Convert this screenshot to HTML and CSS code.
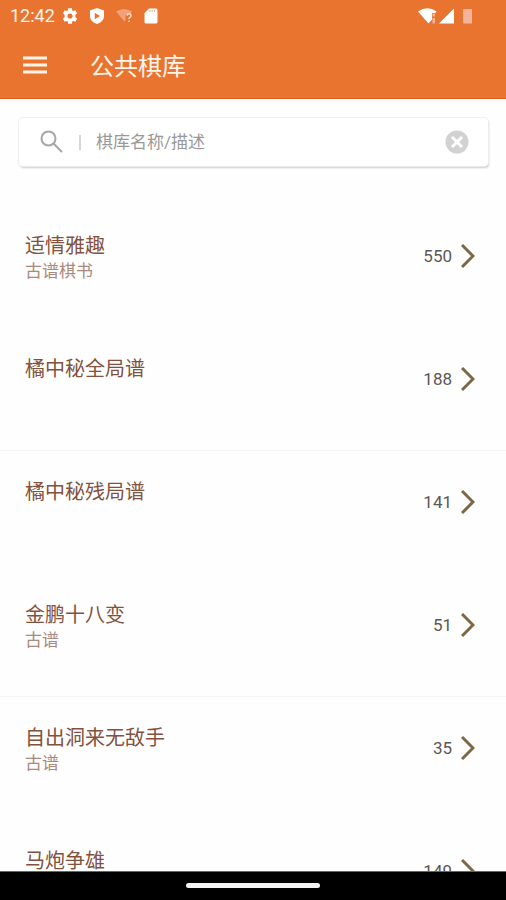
FILE: index.html
```html
<!DOCTYPE html>
<html lang="zh-CN">
<head>
    <meta charset="UTF-8">
    <meta name="viewport" content="width=device-width, initial-scale=1.0">
    <title>公共棋库</title>
    <link rel="stylesheet" href="styles.css">
</head>
<body>
    <header>
        <!-- 状态栏 -->
        <div class="status-bar">
            <span class="time">12:42</span>
            <svg class="status-icon" viewBox="0 0 16 16">
                <path fill-rule="evenodd" d="M6.200 0.300h3.600l.4 2.100 1 .6 2.100-.8 1.800 3.100-1.700 1.400v2.600l1.700 1.400-1.800 3.100-2.100-.8-1 .6-.4 2.100H6.200l-.4-2.100-1-.6-2.100.8-1.800-3.100 1.700-1.400V6.700L.9 5.300l1.800-3.100 2.100.8 1-.6zM8 5.400a2.600 2.600 0 1 0 0 5.200 2.600 2.600 0 0 0 0-5.200z"/>
            </svg>
            <svg class="status-icon" viewBox="0 0 16 16">
                <path fill-rule="evenodd" d="M8 0l7 2.400v5.800c0 3.600-3 6.500-7 7.800-4-1.300-7-4.200-7-7.800V2.400zM5.800 4.800v6.400l5.200-3.200z"/>
            </svg>
            <svg class="status-icon" viewBox="0 0 16 16">
                <path class="faint" d="M0 3.500Q8-1.500 16 3.500L14.500 5.500Q10.500 4.500 9.500 8L9.500 12 8.500 13.500z"/>
                <path class="question" d="M11 7.500q.3-1.700 2-1.700t2 1.700q0 1-1 1.800t-1 1.700M13 12.500v1.500"/>
            </svg>
            <svg class="status-icon" viewBox="0 0 16 16">
                <path d="M6 .5h7q1.500 0 1.500 1.500v12q0 1.500-1.500 1.500H3Q1.500 15.500 1.500 14V5z"/>
                <path class="slots" d="M7 2.200v2M9.200 2.200v2M11.400 2.200v2"/>
            </svg>
            <svg class="signal" viewBox="0 0 56 16">
                <path d="M0 3.500Q9.500-3 18.500 3.500L17.500 5h-3.500v6.500L10.500 15.500z"/>
                <path class="faded" d="M14.500 5.500h2.500v3h-2.500zM14.500 10h2.500v5.500h-2.500z"/>
                <path d="M36 .5v15H21z"/>
                <path class="faded" d="M45 1h9v14.500h-9z"/>
            </svg>
        </div>
        <div class="toolbar">
            <button class="menu-btn" type="button" aria-label="菜单">
                <svg viewBox="0 0 24 18"><path d="M0 2h24M0 9h24M0 16h24"/></svg>
            </button>
            <h1>公共棋库</h1>
        </div>
    </header>

    <main>
        <!-- 搜索框 -->
        <form class="search">
            <svg class="search-icon" viewBox="0 0 24 24">
                <circle cx="8.500" cy="8.500" r="7"/>
                <path d="M13.500 13.500l8.500 8.500"/>
            </svg>
            <span class="divider"></span>
            <input type="text" id="keyword" aria-label="棋库名称/描述" placeholder="棋库名称/描述">
            <button class="clear-btn" type="reset" aria-label="清除">
                <svg viewBox="0 0 24 24">
                    <circle cx="12" cy="12" r="11.500"/>
                    <path d="M7 7l10 10M17 7L7 17"/>
                </svg>
            </button>
        </form>

        <!-- 棋库列表 -->
        <ul class="library">
            <li><a href="#">
                <div class="info"><h2>适情雅趣</h2><p>古谱棋书</p></div>
                <span class="count">550</span>
                <svg class="arrow" viewBox="0 0 14 24"><path d="M1 1l11 11L1 23"/></svg>
            </a></li>
            <li><a href="#">
                <div class="info"><h2>橘中秘全局谱</h2></div>
                <span class="count">188</span>
                <svg class="arrow" viewBox="0 0 14 24"><path d="M1 1l11 11L1 23"/></svg>
            </a></li>
            <li><a href="#">
                <div class="info"><h2>橘中秘残局谱</h2></div>
                <span class="count">141</span>
                <svg class="arrow" viewBox="0 0 14 24"><path d="M1 1l11 11L1 23"/></svg>
            </a></li>
            <li><a href="#">
                <div class="info"><h2>金鹏十八变</h2><p>古谱</p></div>
                <span class="count">51</span>
                <svg class="arrow" viewBox="0 0 14 24"><path d="M1 1l11 11L1 23"/></svg>
            </a></li>
            <li><a href="#">
                <div class="info"><h2>自出洞来无敌手</h2><p>古谱</p></div>
                <span class="count">35</span>
                <svg class="arrow" viewBox="0 0 14 24"><path d="M1 1l11 11L1 23"/></svg>
            </a></li>
            <li><a href="#">
                <div class="info"><h2>马炮争雄</h2></div>
                <span class="count">149</span>
                <svg class="arrow" viewBox="0 0 14 24"><path d="M1 1l11 11L1 23"/></svg>
            </a></li>
        </ul>
    </main>

    <!-- 底部手势条 -->
    <footer><span class="home-bar"></span></footer>
</body>
</html>
```
FILE: styles.css
```css
* {
    box-sizing: border-box;
}
body {
    display: flex;
    flex-direction: column;
    height: 100vh;
    margin: 0;
    background-color: #fefefe;
    font-family: Roboto, "Noto Sans CJK SC", sans-serif;
}
h1, h2, p, ul {
    margin: 0;
    padding: 0;
    font-weight: 400;
}
button {
    padding: 0;
    border: none;
    background: none;
    cursor: pointer;
}
svg {
    display: block;
    flex: none;
}

/* 顶部 */
header {
    flex: none;
    background-color: #e8742f;
    border-bottom: 1px solid #d9611f;
    color: #fff4ea;
}
.status-bar {
    display: flex;
    align-items: center;
    height: 32px;
    padding: 0 32px 0 10px;
}
.time {
    margin-right: 7px;
    font-size: 18px;
    line-height: 32px;
}
.status-icon {
    width: 16px;
    height: 16px;
    margin-right: 11px;
    fill: #fff;
}
.signal {
    width: 56px;
    height: 16px;
    margin-left: auto;
    fill: #fff;
}
.faded {
    fill: #f4b39a;
}
.faint {
    fill: #f0a27c;
}
.question {
    fill: none;
    stroke: #fbdccb;
    stroke-width: 1.5;
}
.slots {
    stroke: #f0a98a;
    stroke-width: 1;
}
.toolbar {
    display: flex;
    align-items: center;
    height: 66px;
    padding: 0 23px;
}
.menu-btn {
    margin-right: 43px;
}
.menu-btn svg {
    width: 24px;
    height: 18px;
    stroke: #fff4ea;
    stroke-width: 3;
}
h1 {
    padding-top: 4px;
    font-size: 24px;
    line-height: 36px;
}

/* 内容 */
main {
    flex: 1;
    min-height: 0;
    overflow-y: auto;
    scrollbar-width: none;
}
.search {
    display: flex;
    align-items: center;
    height: 48px;
    margin: 19px 18px 39px 19px;
    padding: 0 19px 0 21px;
    border-radius: 4px;
    background-color: #fff;
    box-shadow: 0 0 1px 1px #eee, 1px 2px 2px #ccc;
}
.search-icon {
    width: 24px;
    height: 24px;
    fill: none;
    stroke: #a6a6a6;
    stroke-width: 2;
}
.divider {
    width: 2px;
    height: 15px;
    margin: 0 15px;
    background-color: #d6d6d6;
}
.search input {
    flex: 1;
    min-width: 0;
    padding: 0;
    border: none;
    outline: none;
    background: none;
    color: #555;
    font-family: inherit;
    font-size: 17px;
}
.search input::placeholder {
    color: #999;
}
.clear-btn svg {
    width: 24px;
    height: 24px;
    fill: #d2d2d2;
}
.clear-btn path {
    stroke: #fff;
    stroke-width: 3;
}
.library {
    list-style: none;
}
.library li {
    height: 123px;
}
.library li:nth-child(even) {
    border-bottom: 1px solid #f4f4f4;
}
.library a {
    display: flex;
    align-items: center;
    height: 102px;
    padding: 0 31px 0 25px;
    text-decoration: none;
}
.info {
    flex: 1;
    align-self: flex-start;
    padding-top: 28px;
}
h2 {
    color: #82523f;
    font-size: 20px;
    line-height: 26px;
}
.info p {
    color: #aa8a7c;
    font-size: 17px;
    line-height: 24px;
}
.count {
    margin-right: 9px;
    color: #5c5753;
    font-size: 17px;
}
.arrow {
    width: 14px;
    height: 24px;
    fill: none;
    stroke: #7c6845;
    stroke-width: 3;
}

footer {
    display: flex;
    flex: none;
    justify-content: center;
    height: 29px;
    padding-top: 11px;
    border-top: 1px solid #666;
    background-color: #000;
}
.home-bar {
    width: 134px;
    height: 5px;
    border-radius: 3px;
    background-color: #f2f2f2;
}
```
